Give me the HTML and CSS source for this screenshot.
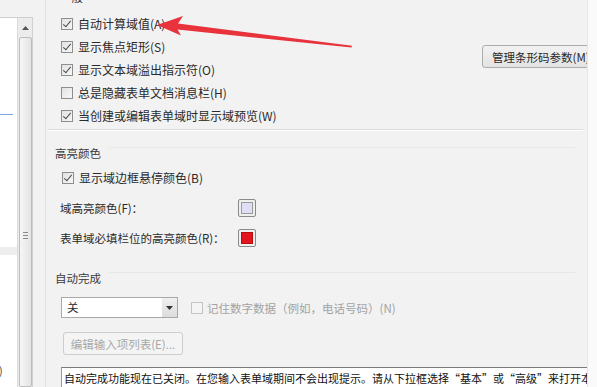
FILE: index.html
```html
<!DOCTYPE html>
<html lang="zh-CN">
<head>
<meta charset="utf-8">
<title>表单选项</title>
<link rel="stylesheet" href="styles.css">
</head>
<body>
<div class="window">
  <aside class="side">
    <div class="list">
      <div class="list-items">
        <div class="sel-line"></div>
        <div class="hover-bar"></div>
        <div class="paren">)</div>
      </div>
      <div class="scroll">
        <div class="sb-arrow">
          <svg width="7" height="4" viewBox="0 0 7 4"><path d="M0 4 L3.5 0 L7 4 Z" fill="#555"/></svg>
        </div>
        <div class="thumb">
          <div class="grip"><span></span><span></span><span></span></div>
        </div>
      </div>
    </div>
  </aside>
  <div class="divider"><div class="vline"></div></div>
  <main class="main">
    <section class="general">
      <div class="gtitle gtitle-top">一般</div>
      <div class="general-body">
        <div class="checks">
          <label class="row"><span class="cb on"></span>自动计算域值(A)</label>
          <label class="row"><span class="cb on"></span>显示焦点矩形(S)</label>
          <label class="row"><span class="cb on"></span>显示文本域溢出指示符(O)</label>
          <label class="row"><span class="cb"></span>总是隐藏表单文档消息栏(H)</label>
          <label class="row"><span class="cb on"></span>当创建或编辑表单域时显示域预览(W)</label>
        </div>
        <div class="btn-col">
          <button class="btn">管理条形码参数(M)...</button>
        </div>
      </div>
    </section>
    <div class="sep"></div>
    <section class="highlight">
      <div class="gtitle">高亮颜色</div>
      <label class="row row-b"><span class="cb on"></span>显示域边框悬停颜色(B)</label>
      <div class="color-row"><span class="clabel">域高亮颜色(F)：</span><span class="swatch"><span class="fill lav"></span></span></div>
      <div class="color-row"><span class="clabel">表单域必填栏位的高亮颜色(R)：</span><span class="swatch"><span class="fill red"></span></span></div>
    </section>
    <section class="auto">
      <div class="gtitle">自动完成</div>
      <div class="auto-row">
        <div class="select"><span class="sval">关</span><span class="sarrow"><svg width="7" height="4" viewBox="0 0 7 4"><path d="M0 0 L7 0 L3.5 4 Z" fill="#333"/></svg></span></div>
        <label class="row dis"><span class="cb disabled"></span>记住数字数据（例如，电话号码）(N)</label>
      </div>
      <button class="btn btn-dis">编辑输入项列表(E)...</button>
      <div class="info">自动完成功能现在已关闭。在您输入表单域期间不会出现提示。请从下拉框选择“基本”或“高级”来打开本功能。</div>
    </section>
  </main>
  <div class="right-edge"></div>
</div>
<svg class="arrow" width="597" height="387" viewBox="0 0 597 387">
  <polygon points="157,25 183,16 178,23.5 352,45.8 351.5,47.6 177.5,29.5 181,35.5" fill="#e8323c"/>
</svg>
</body>
</html>
```

FILE: styles.css
```css
* { box-sizing: border-box; }
html, body {
  margin: 0;
  padding: 0;
}
body {
  width: 597px;
  height: 387px;
  overflow: hidden;
  background: #f2f2f2;
  font-family: "Noto Sans CJK SC", "Noto Sans", sans-serif;
  font-size: 12px;
  color: #2a2a2a;
  position: relative;
}
.window {
  display: flex;
  height: 387px;
}
.side {
  width: 33px;
  flex: none;
  padding-top: 17px;
}
.list {
  display: flex;
  height: 100%;
  border-top: 1px solid #cfcfcf;
}
.list-items {
  width: 17px;
  background: #fff;
  display: flex;
  flex-direction: column;
}
.sel-line {
  margin-top: 96px;
  height: 1px;
  width: 13px;
  background: #7aa7e0;
}
.hover-bar {
  margin-top: 132px;
  height: 8px;
  background: #eeeeee;
}
.paren {
  margin-top: 108px;
  font-size: 11px;
  line-height: 14px;
  color: #444;
  margin-left: -1px;
}
.scroll {
  width: 16px;
  background: #ececec;
  border-left: 1px solid #dadada;
  border-right: 1px solid #d0d0d0;
  display: flex;
  flex-direction: column;
  align-items: center;
}
.sb-arrow {
  height: 19px;
  display: flex;
  align-items: center;
  justify-content: center;
  width: 100%;
}
.thumb {
  flex: 1;
  width: 13px;
  border: 1px solid #bdbdbd;
  border-radius: 2px;
  background: linear-gradient(90deg, #f6f6f6, #e4e4e4);
  display: flex;
  flex-direction: column;
  align-items: center;
  padding-top: 194px;
}
.grip span {
  display: block;
  width: 5px;
  height: 1px;
  background: #8a8a8a;
  margin-bottom: 2px;
}
.divider {
  width: 15px;
  flex: none;
  display: flex;
  justify-content: flex-end;
  padding-right: 2px;
}
.vline {
  width: 1px;
  background: #e2e2e2;
}
.main {
  width: 539px;
  flex: none;
  overflow: hidden;
  display: flex;
  flex-direction: column;
}
.right-edge {
  flex: 1;
  background: #fafafa;
  border-left: 1px solid #e6e6e6;
}
.gtitle {
  height: 16px;
  line-height: 16px;
  padding-left: 7px;
  font-size: 11.5px;
  color: #3a3a3a;
  display: flex;
}
.gtitle::after {
  content: "";
  flex: 1;
  align-self: flex-start;
  margin: 2px 12px 0 8px;
  border-top: 1px solid #e7e7e7;
}
.gtitle-top {
  margin-top: -11px;
  padding-left: 12px;
}
.gtitle-top::after { display: none; }
.general-body {
  display: flex;
  padding-top: 7px;
}
.checks {
  width: 434px;
  flex: none;
  padding-left: 13px;
  display: flex;
  flex-direction: column;
}
.row {
  height: 23px;
  display: flex;
  align-items: center;
  gap: 5px;
  white-space: nowrap;
}
.cb {
  width: 12px;
  height: 12px;
  flex: none;
  border: 1px solid #8e8e8e;
  background: linear-gradient(135deg, #e2e2e2, #f7f7f7);
  position: relative;
}
.cb.on::after {
  content: "";
  position: absolute;
  left: 3px;
  top: 0px;
  width: 3px;
  height: 7px;
  border: solid #4a4a4a;
  border-width: 0 1.5px 1.5px 0;
  transform: rotate(40deg);
}
.cb.disabled {
  border-color: #c4c4c4;
  background: #f4f4f4;
}
.btn-col {
  flex: none;
  padding-top: 33px;
}
.btn {
  height: 23px;
  padding: 0 9px;
  font-family: inherit;
  font-size: 11.5px;
  color: #2a2a2a;
  border: 1px solid #acacac;
  border-radius: 3px;
  background: linear-gradient(#f2f2f2, #e3e3e3);
  white-space: nowrap;
}
.sep {
  margin-top: 2px;
  height: 2px;
  border-top: 1px solid #dcdcdc;
  border-bottom: 1px solid #ffffff;
  margin-right: 4px;
}
.highlight {
  margin-top: 14px;
  display: flex;
  flex-direction: column;
}
.row-b {
  margin-top: 5px;
  padding-left: 14px;
}
.color-row {
  height: 30px;
  display: flex;
  align-items: center;
  padding-left: 12px;
}
.row-b + .color-row { margin-top: 4px; }
.clabel {
  width: 178px;
  flex: none;
  font-size: 11.5px;
  white-space: nowrap;
}
.swatch {
  width: 18px;
  height: 18px;
  border: 1px solid #8a8a8a;
  border-radius: 2px;
  background: #efefef;
  padding: 2px;
  display: flex;
}
.fill { flex: 1; border: 1px solid #9a9a9a; }
.fill.lav { background: #dedff5; }
.fill.red { background: #e4141c; border-color: #b01010; }
.auto {
  margin-top: 17px;
  display: flex;
  flex-direction: column;
}
.auto-row {
  margin-top: 10px;
  padding-left: 13px;
  display: flex;
  align-items: center;
  gap: 13px;
}
.select {
  width: 117px;
  height: 21px;
  background: #fff;
  border: 1px solid #a8a8a8;
  display: flex;
  align-items: stretch;
}
.sval {
  flex: 1;
  padding-left: 5px;
  line-height: 19px;
  font-size: 11.5px;
}
.sarrow {
  width: 15px;
  background: linear-gradient(#f0f0f0, #dcdcdc);
  display: flex;
  align-items: center;
  justify-content: center;
}
.row.dis {
  color: #a3a3a3;
  font-size: 11.5px;
  gap: 4px;
}
.btn-dis {
  align-self: flex-start;
  margin-top: 13px;
  margin-left: 15px;
  width: 120px;
  padding: 0;
  color: #a8a8a8;
  border-color: #cdcdcd;
  background: #f4f4f4;
}
.info {
  margin-top: 12px;
  margin-left: 13px;
  height: 30px;
  background: #fff;
  border-top: 1px solid #7a7a7a;
  border-left: 1px solid #9a9a9a;
  padding: 2px 0 0 2px;
  font-size: 11px;
  line-height: 16px;
  color: #111;
  white-space: nowrap;
}
.arrow {
  position: absolute;
  left: 0;
  top: 0;
  pointer-events: none;
}
```
